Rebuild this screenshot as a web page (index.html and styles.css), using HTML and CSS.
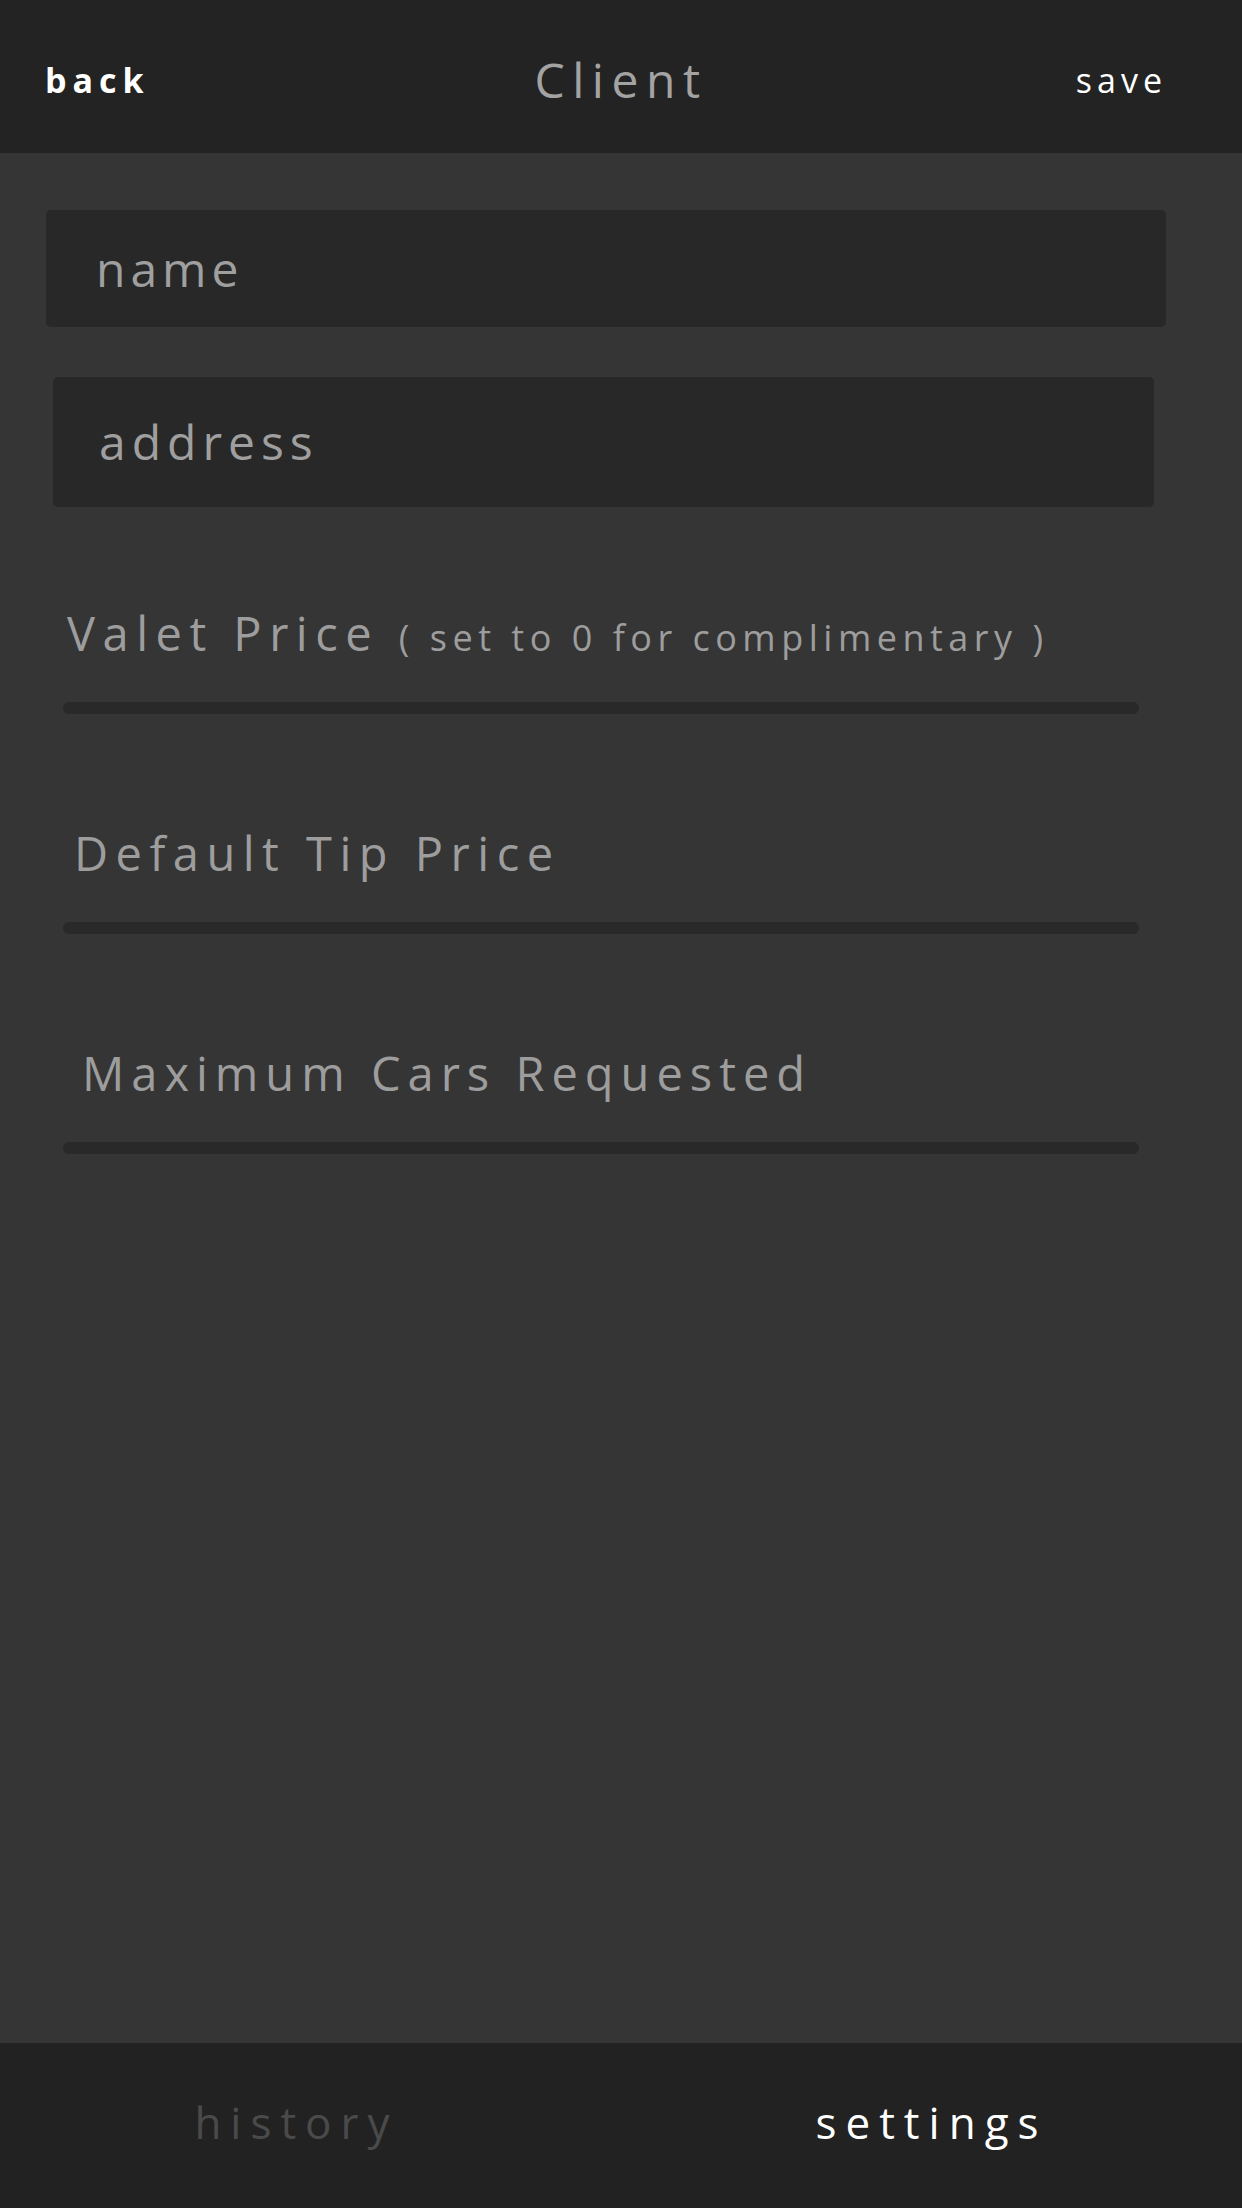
FILE: index.html
```html
<!DOCTYPE html>
<html lang="en">
<head>
<meta charset="utf-8">
<title>Client</title>
<link rel="stylesheet" href="styles.css">
</head>
<body>
<header class="topbar">
  <span class="topbar__back">back</span>
  <h1 class="topbar__title">Client</h1>
  <span class="topbar__save">save</span>
</header>
<main class="content">
  <div class="textbox textbox--name"><span class="textbox__ph">name</span></div>
  <div class="textbox textbox--address"><span class="textbox__ph textbox__ph--wide">address</span></div>

  <div class="field field--valet">
    <div class="field__label">Valet Price <span class="field__hint">( set to 0 for complimentary )</span></div>
    <div class="field__bar"></div>
  </div>
  <div class="field field--tip">
    <div class="field__label">Default Tip Price</div>
    <div class="field__bar"></div>
  </div>
  <div class="field field--max">
    <div class="field__label">Maximum Cars Requested</div>
    <div class="field__bar"></div>
  </div>
</main>
<nav class="tabbar">
  <span class="tabbar__item tabbar__item--history">history</span>
  <span class="tabbar__item tabbar__item--active">settings</span>
</nav>
</body>
</html>
```
FILE: styles.css
```css
html, body {
  margin: 0;
  padding: 0;
}
body {
  width: 1242px;
  height: 2208px;
  display: flex;
  flex-direction: column;
  background: #353535;
  font-family: "Open Sans", "Noto Sans", sans-serif;
  overflow: hidden;
}

/* header */
.topbar {
  height: 153px;
  box-sizing: border-box;
  padding: 6px 45px 0 45px;
  background: #232323;
  display: grid;
  grid-template-columns: 1fr auto 1fr;
  align-items: center;
  flex: none;
}
.topbar__back {
  justify-self: start;
  color: #ffffff;
  font-weight: 700;
  font-size: 34px;
  line-height: 34px;
  letter-spacing: 6px;
}
.topbar__title {
  margin: 0;
  color: #a3a3a3;
  font-weight: 400;
  font-size: 48px;
  line-height: 48px;
  letter-spacing: 7.5px;
}
.topbar__save {
  justify-self: end;
  margin-right: 30px;
  color: #ffffff;
  font-size: 34px;
  line-height: 34px;
  letter-spacing: 5px;
}

/* content */
.content {
  flex: 1;
  display: flex;
  flex-direction: column;
}
.textbox {
  background: #282828;
  border-radius: 5px;
  display: flex;
  align-items: center;
  box-sizing: border-box;
}
.textbox__ph {
  color: #9f9f9f;
  font-size: 48px;
  line-height: 48px;
  letter-spacing: 5px;
}
.textbox__ph--wide {
  letter-spacing: 6px;
}
.textbox--name {
  margin: 57px 76px 0 46px;
  height: 117px;
  padding-left: 50px;
}
.textbox--address {
  margin: 50px 88px 0 53px;
  height: 130px;
  padding-left: 46px;
}

.field {
  display: flex;
  flex-direction: column;
  margin-top: 116px;
}
.field--valet {
  margin-top: 103px;
}
.field__label {
  color: #9d9d9d;
  font-size: 47px;
  line-height: 47px;
  letter-spacing: 7.5px;
  white-space: nowrap;
}
.field__hint {
  font-size: 36px;
  line-height: 1;
  letter-spacing: 5.5px;
}
.field__bar {
  height: 12px;
  border-radius: 6px;
  background: #292929;
  margin: 45px 103px 0 63px;
}
.field--valet .field__label { padding-left: 67px; }
.field--tip .field__label { padding-left: 74px; }
.field--max .field__label { padding-left: 82px; letter-spacing: 7px; }

/* bottom tabs */
.tabbar {
  flex: none;
  height: 165px;
  box-sizing: border-box;
  padding-bottom: 8px;
  background: #222222;
  display: grid;
  grid-template-columns: 1fr 1fr;
  align-items: center;
  justify-items: center;
}
.tabbar__item {
  font-size: 44px;
  line-height: 44px;
  letter-spacing: 9px;
  color: #4a4a4a;
}
.tabbar__item--history {
  margin-right: 28px;
}
.tabbar__item--active {
  color: #ffffff;
}
```
